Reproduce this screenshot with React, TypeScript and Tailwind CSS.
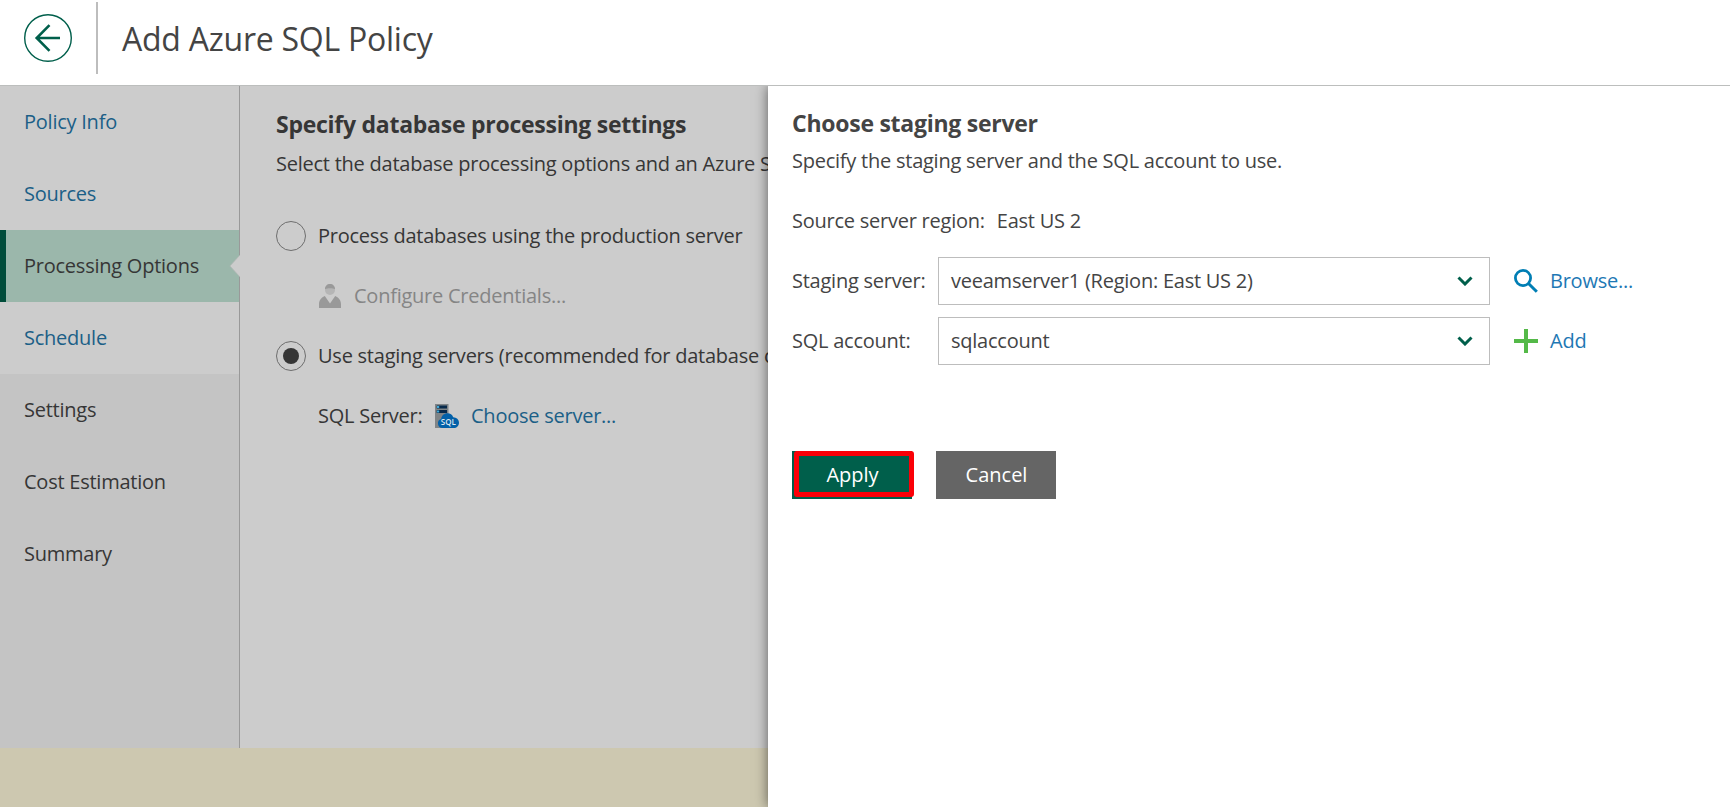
import React from "react";

type StepState = "done" | "current" | "upcoming";

const steps: { label: string; state: StepState }[] = [
  { label: "Policy Info", state: "done" },
  { label: "Sources", state: "done" },
  { label: "Processing Options", state: "current" },
  { label: "Schedule", state: "done" },
  { label: "Settings", state: "upcoming" },
  { label: "Cost Estimation", state: "upcoming" },
  { label: "Summary", state: "upcoming" },
];

const stepStyles: Record<StepState, string> = {
  done: "pl-6 bg-[#cccccc] text-[#1b5f87]",
  current: "pl-[18px] border-l-[6px] border-[#004c3a] bg-[#9bb7ab] text-[#363636]",
  upcoming: "pl-6 text-[#363636]",
};

function Header() {
  return (
    <header className="relative z-10 flex h-[86px] shrink-0 items-start border-b border-[#bcbebd] bg-white">
      <button className="mt-[14px] ml-6 h-12 w-12" aria-label="Back">
        <svg viewBox="0 0 48 48" className="h-12 w-12" fill="none" stroke="#005f4b">
          <circle cx="24" cy="24" r="23.3" strokeWidth="1.4" />
          <path d="M36 24H12.5M25.5 11.2L12.7 24L25.5 36.8" strokeWidth="2.6" />
        </svg>
      </button>
      <div className="mt-0.5 ml-6 h-[72px] w-0.5 bg-[#bdbdbd]" />
      <h1 className="ml-6 text-[32px] leading-[78px] tracking-[-0.24px] text-[#444444]">Add Azure SQL Policy</h1>
    </header>
  );
}

function Sidebar() {
  return (
    <nav className="w-60 shrink-0 border-r border-[#999999] bg-[#c4c4c4]">
      {steps.map((s) => (
        <div key={s.label} className={`relative flex h-[72px] items-center ${stepStyles[s.state]}`}>
          <span>{s.label}</span>
          {s.state === "current" && (
            <svg viewBox="0 0 11 22" className="absolute top-[25px] -right-px h-[22px] w-[11px]">
              <path d="M11 0L1 11L11 22Z" fill="#cccccc" />
              <path d="M10.5 0.5L0.8 11L10.5 21.5" fill="none" stroke="#b0b8b4" strokeWidth="0.8" />
            </svg>
          )}
        </div>
      ))}
    </nav>
  );
}

function Radio({ checked = false }: { checked?: boolean }) {
  return (
    <span className="flex h-[30px] w-[30px] shrink-0 items-center justify-center rounded-full border-[1.5px] border-[#6e6e6e]">
      {checked && <span className="h-4 w-4 rounded-full bg-[#363636]" />}
    </span>
  );
}

function UserIcon() {
  return (
    <svg viewBox="0 0 22 24" className="h-6 w-[22px] shrink-0">
      <circle cx="11" cy="6" r="5" fill="#b5b5b5" />
      <path d="M6 5.2C6 2 8 0 11 0s5 2 5 5.2C13.500 3.800 8.500 3.800 6 5.200Z" fill="#999999" />
      <path d="M0 24v-4c0-3 1.800-6.500 5.800-8L11 19.500L16.200 12c4 1.500 5.800 5 5.800 8v4Z" fill="#999999" />
    </svg>
  );
}

function SqlServerIcon() {
  return (
    <svg viewBox="0 0 24 24" className="h-6 w-6 shrink-0">
      <rect width="13.500" height="24" fill="#7f8487" />
      <rect x="1.700" y="1.500" width="10.300" height="3" fill="#07294a" />
      <rect x="1.700" y="6" width="10.300" height="3" fill="#07294a" />
      <rect x="2" y="2" width="2.200" height="2" fill="#3fa9d8" />
      <rect x="2" y="6.500" width="2.200" height="2" fill="#3fa9d8" />
      <path
        d="M7.500 24a4.600 4.600 0 0 1-1.300-9c.2-3.500 3-5.800 6.200-5.800 2.800 0 5 1.500 5.800 4 3.300.1 5.800 2.400 5.800 5.500 0 3-2.300 5.300-5.200 5.300Z"
        fill="#0260a8"
      />
      <text
        x="13.300"
        y="21"
        textAnchor="middle"
        fontSize="8"
        fontWeight="600"
        letterSpacing="0"
        fill="#dce6ee"
        fontFamily="Open Sans"
      >
        SQL
      </text>
    </svg>
  );
}

function ProcessingSettings() {
  return (
    <main className="w-[528px] shrink-0 overflow-hidden bg-[#cccccc] pl-9 whitespace-nowrap text-[#363636]">
      <h2 className="mt-[22px] text-[23px] leading-8 font-bold tracking-[-0.26px]">
        Specify database processing settings
      </h2>
      <p className="mt-2 leading-8">Select the database processing options and an Azure S</p>
      <div className="mt-[26px] flex h-[60px] items-center gap-3">
        <Radio />
        <span>Process databases using the production server</span>
      </div>
      <div className="flex h-[60px] items-center gap-[13px] pl-[43px] text-[#858585]">
        <UserIcon />
        <span>Configure Credentials...</span>
      </div>
      <div className="flex h-[60px] items-center gap-3">
        <Radio checked />
        <span>Use staging servers (recommended for database c</span>
      </div>
      <div className="flex h-[60px] items-center pl-[42px]">
        <span className="w-[117px]">SQL Server:</span>
        <SqlServerIcon />
        <span className="ml-3 text-[#1b5f87]">Choose server...</span>
      </div>
    </main>
  );
}

function Select({ value }: { value: string }) {
  return (
    <div className="flex h-12 w-[552px] items-center justify-between border border-[#bdbdbd] pr-4 pl-3">
      <span>{value}</span>
      <svg viewBox="0 0 16 10" className="h-2.5 w-4" fill="none" stroke="#005f4b" strokeWidth="3">
        <path d="M1.500 1.500L8 8L14.500 1.500" />
      </svg>
    </div>
  );
}

function SearchIcon() {
  return (
    <svg viewBox="0 0 24 24" className="h-6 w-6" fill="none" stroke="#007eb4">
      <circle cx="9" cy="9" r="7.600" strokeWidth="2.800" />
      <path d="M14.500 14.500L22.800 22.800" strokeWidth="3" />
    </svg>
  );
}

function PlusIcon() {
  return (
    <svg viewBox="0 0 24 24" className="h-6 w-6" stroke="#54b948" strokeWidth="4">
      <path d="M12 0V24M0 12H24" />
    </svg>
  );
}

function StagingPanel() {
  return (
    <aside className="relative min-w-0 flex-1 bg-white pl-6 whitespace-nowrap text-[#444444] shadow-[0_0_12px_rgba(0,0,0,0.55)]">
      <h2 className="mt-[21px] text-[23px] leading-8 font-bold tracking-[-0.26px]">Choose staging server</h2>
      <p className="mt-1.5 leading-8">Specify the staging server and the SQL account to use.</p>
      <div className="mt-[14px] flex h-[60px] items-center gap-3">
        <span>Source server region:</span>
        <span>East US 2</span>
      </div>
      <div className="flex h-[60px] items-center">
        <label className="w-[146px]">Staging server:</label>
        <Select value="veeamserver1 (Region: East US 2)" />
        <button className="ml-6 flex items-center gap-3 text-[#1e78b4]">
          <SearchIcon />
          Browse...
        </button>
      </div>
      <div className="flex h-[60px] items-center">
        <label className="w-[146px]">SQL account:</label>
        <Select value="sqlaccount" />
        <button className="ml-6 flex items-center gap-3 text-[#1e78b4]">
          <PlusIcon />
          Add
        </button>
      </div>
      <div className="mt-20 flex gap-6 tracking-normal text-white">
        <button className="relative h-12 w-[120px] bg-[#005f4b] pl-px">
          Apply
          <span className="absolute top-0 left-0.5 h-[46px] w-[120px] rounded-[3px] border-[5px] border-[#fb0007]" />
        </button>
        <button className="h-12 w-[120px] bg-[#656565] pl-px">Cancel</button>
      </div>
    </aside>
  );
}

export default function App() {
  return (
    <div className="flex h-[807px] w-[1730px] flex-col overflow-hidden bg-white font-['Open_Sans',sans-serif] text-[20px] tracking-[-0.24px]">
      <Header />
      <div className="flex min-h-0 flex-1 overflow-hidden">
        <div className="flex w-[768px] shrink-0 flex-col">
          <div className="flex min-h-0 flex-1">
            <Sidebar />
            <ProcessingSettings />
          </div>
          <footer className="h-[59px] shrink-0 bg-[#cdc8b0]" />
        </div>
        <StagingPanel />
      </div>
    </div>
  );
}
